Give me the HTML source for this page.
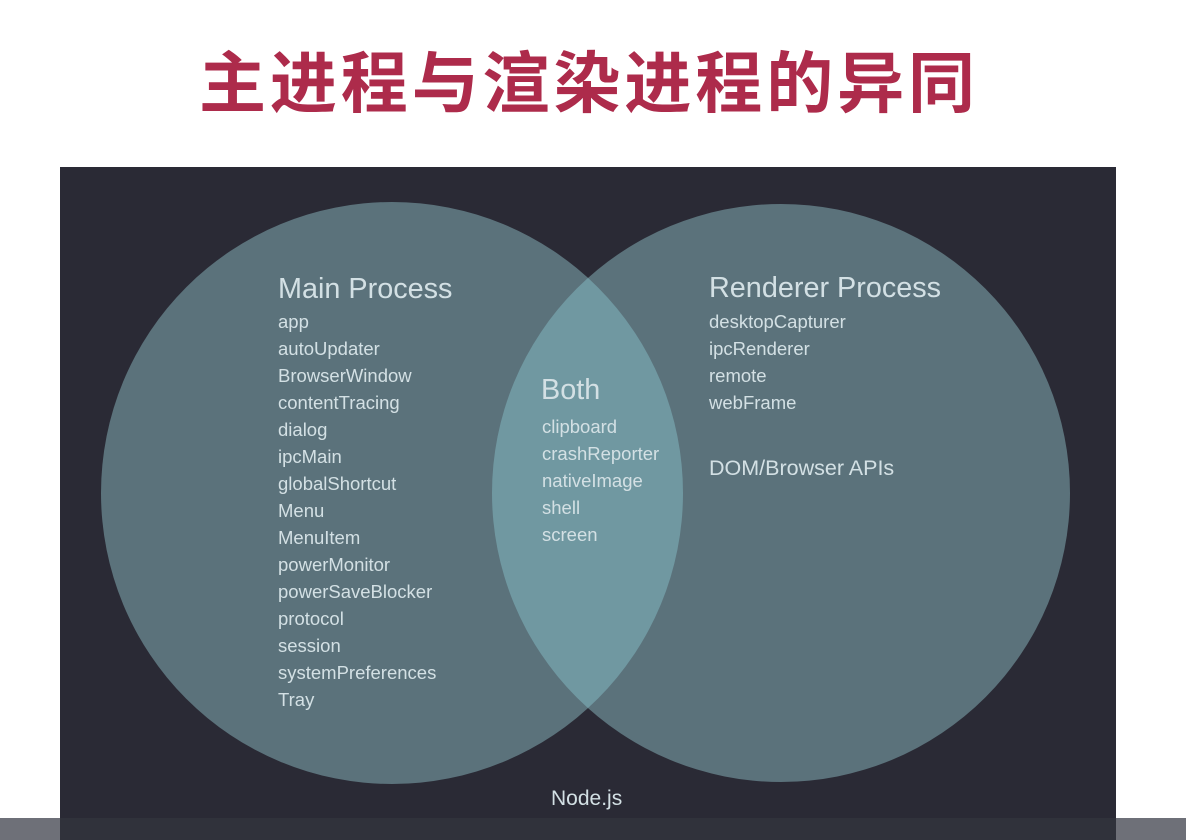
<!DOCTYPE html>
<html><head><meta charset="utf-8"><style>
html,body{margin:0;padding:0;width:1186px;height:840px;overflow:hidden;background:#fff;position:relative;font-family:"Liberation Sans","DejaVu Sans",sans-serif}
.title{position:absolute;left:199px;top:45px;font-family:"Liberation Sans","Noto Sans CJK SC",sans-serif;font-weight:bold;font-size:67px;letter-spacing:3.9px;color:#ad2b4b;line-height:80px;white-space:nowrap}
.panel{position:absolute;left:60px;top:167px;width:1056px;height:673px;background:#2a2a35;overflow:hidden}
.t{position:absolute;color:#d3e0e4;white-space:nowrap}
.h{font-size:28.8px}
.l{font-size:18.5px;line-height:27px}
.bar{position:absolute;left:0;top:818px;width:1186px;height:22px;background:#6e7078}
.bar2{position:absolute;left:60px;top:818px;width:1056px;height:22px;background:#30323b}
</style></head><body>
<div class="title">主进程与渲染进程的异同</div>
<div class="panel">
<svg width="1056" height="673" style="position:absolute;left:0;top:0">
<defs><clipPath id="c"><circle cx="332" cy="326" r="291"/></clipPath></defs>
<circle cx="332" cy="326" r="291" fill="#5b727b"/>
<circle cx="721" cy="326" r="289" fill="#5b727b"/>
<circle cx="721" cy="326" r="289" fill="#7098a1" clip-path="url(#c)"/>
</svg>
</div>
<div class="t h" style="left:278px;top:273px">Main Process</div>
<div class="t l" style="left:278px;top:308px">app<br>autoUpdater<br>BrowserWindow<br>contentTracing<br>dialog<br>ipcMain<br>globalShortcut<br>Menu<br>MenuItem<br>powerMonitor<br>powerSaveBlocker<br>protocol<br>session<br>systemPreferences<br>Tray</div>
<div class="t h" style="left:709px;top:272px">Renderer Process</div>
<div class="t l" style="left:709px;top:308px">desktopCapturer<br>ipcRenderer<br>remote<br>webFrame</div>
<div class="t" style="left:709px;top:456px;font-size:21.5px">DOM/Browser APIs</div>
<div class="t h" style="left:541px;top:374px">Both</div>
<div class="t l" style="left:542px;top:413px">clipboard<br>crashReporter<br>nativeImage<br>shell<br>screen</div>
<div class="t" style="left:551px;top:787px;font-size:21px">Node.js</div>
<div class="bar"></div><div class="bar2"></div>
</body></html>
